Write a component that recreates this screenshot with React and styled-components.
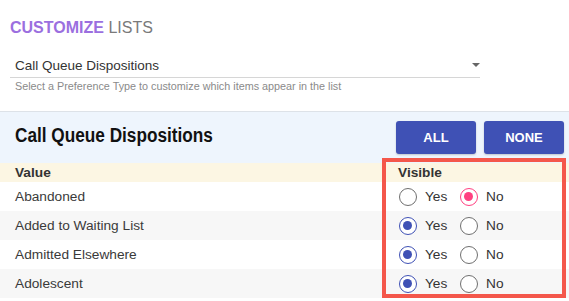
import React, { useState } from 'react';
import styled, { createGlobalStyle } from 'styled-components';

const GlobalStyle = createGlobalStyle`
    * { box-sizing: border-box; }
    body {
        margin: 0;
        background: #fff;
        font-family: "Liberation Sans", Arial, sans-serif;
        color: #333;
    }
`;

const Page = styled.div`
    width: 569px;
    overflow: hidden;
`;

const PageTitle = styled.h1`
    margin: 0;
    padding: 19px 10px 0;
    font-size: 16px;
    line-height: 18px;
    font-weight: normal;
    color: #7a7a7a;

    strong {
        color: #9b6fdf;
        font-weight: bold;
    }
`;

const SelectField = styled.div`
    margin: 19px 0 0 10px;
    width: 470px;
`;

const SelectBox = styled.div`
    display: flex;
    align-items: center;
    justify-content: space-between;
    height: 22px;
    padding: 0 0 3px 5px;
    border-bottom: 1px solid #d6d6d6;
    font-size: 13.5px;
    color: #333;
`;

const Caret = styled.span`
    width: 0;
    height: 0;
    border-left: 4px solid transparent;
    border-right: 4px solid transparent;
    border-top: 4px solid #666;
`;

const HelperText = styled.div`
    margin-top: 2px;
    padding-left: 5px;
    font-size: 10.8px;
    line-height: 13px;
    color: #8a8a8a;
`;

const Panel = styled.section`
    margin-top: 18px;
    border-top: 1px solid #dde2e8;
`;

const PanelHeader = styled.div`
    display: flex;
    align-items: flex-start;
    justify-content: space-between;
    height: 51px;
    padding: 9px 5px 0 15px;
    background: #eef5fd;
`;

const PanelTitle = styled.h2`
    margin: 0;
    padding-top: 2px;
    font-family: "Liberation Sans", Arial, sans-serif;
    font-size: 20px;
    line-height: 24px;
    font-weight: bold;
    color: #111;
    transform: scaleX(0.86);
    transform-origin: left center;
    white-space: nowrap;
`;

const ButtonGroup = styled.div`
    display: flex;
    gap: 8px;
`;

const ActionButton = styled.button`
    width: 80px;
    height: 33px;
    border: none;
    border-radius: 3px;
    background: #3f51b5;
    color: #fff;
    font-family: "Liberation Sans", Arial, sans-serif;
    font-size: 13px;
    font-weight: bold;
    box-shadow: 0 1px 2px rgba(0, 0, 0, 0.2);
    cursor: pointer;
`;

const Table = styled.div`
    position: relative;
`;

const Row = styled.div`
    display: grid;
    grid-template-columns: 1fr 171px;
    align-items: center;
    height: ${props => (props.$head ? '19px' : '29px')};
    background: ${props => (props.$head ? '#fcf6e3' : props.$striped ? '#f7f7f7' : '#fff')};
    font-size: 13.7px;
    font-weight: ${props => (props.$head ? 'bold' : 'normal')};
    color: ${props => (props.$head ? '#333' : '#3a3a3a')};
`;

const ValueCell = styled.div`
    padding-left: 15px;
`;

const VisibleCell = styled.div`
    display: flex;
    align-items: center;
    padding-left: ${props => (props.$head ? '0' : '1px')};
`;

const Option = styled.label`
    display: flex;
    align-items: center;
    gap: 8px;
    width: 61px;
    font-size: 13.7px;
    color: #333;
    cursor: pointer;
`;

const RadioCircle = styled.span`
    position: relative;
    width: 18px;
    height: 18px;
    border-radius: 50%;
    border: 1.5px solid ${props => (props.$checked ? props.$color : '#6f6f6f')};
    background: #fff;

    &::after {
        content: '';
        position: absolute;
        top: 3px;
        left: 3px;
        width: 9px;
        height: 9px;
        border-radius: 50%;
        background: ${props => props.$color};
        display: ${props => (props.$checked ? 'block' : 'none')};
    }
`;

const Highlight = styled.div`
    position: absolute;
    top: -5px;
    left: 382px;
    width: 184px;
    height: 140px;
    border: 4px solid #f4574b;
    pointer-events: none;
`;

const initialItems = [
    { name: 'Abandoned', visible: false },
    { name: 'Added to Waiting List', visible: true },
    { name: 'Admitted Elsewhere', visible: true },
    { name: 'Adolescent', visible: true },
];

function App() {
    const [items, setItems] = useState(initialItems);

    const setAll = value => setItems(list => list.map(item => ({ ...item, visible: value })));
    const setOne = (index, value) =>
        setItems(list => list.map((item, i) => (i === index ? { ...item, visible: value } : item)));

    return (
        <Page>
            <GlobalStyle />
            <PageTitle>
                <strong>CUSTOMIZE</strong> LISTS
            </PageTitle>
            <SelectField>
                <SelectBox>
                    <span>Call Queue Dispositions</span>
                    <Caret />
                </SelectBox>
                <HelperText>Select a Preference Type to customize which items appear in the list</HelperText>
            </SelectField>
            <Panel>
                <PanelHeader>
                    <PanelTitle>Call Queue Dispositions</PanelTitle>
                    <ButtonGroup>
                        <ActionButton type="button" onClick={() => setAll(true)}>ALL</ActionButton>
                        <ActionButton type="button" onClick={() => setAll(false)}>NONE</ActionButton>
                    </ButtonGroup>
                </PanelHeader>
                <Table>
                    <Row $head>
                        <ValueCell>Value</ValueCell>
                        <VisibleCell $head>Visible</VisibleCell>
                    </Row>
                    {items.map((item, i) => (
                        <Row key={item.name} $striped={i % 2 === 1}>
                            <ValueCell>{item.name}</ValueCell>
                            <VisibleCell>
                                <Option onClick={() => setOne(i, true)}>
                                    <RadioCircle $checked={item.visible} $color="#3f51b5" />
                                    Yes
                                </Option>
                                <Option onClick={() => setOne(i, false)}>
                                    <RadioCircle $checked={!item.visible} $color="#ff4081" />
                                    No
                                </Option>
                            </VisibleCell>
                        </Row>
                    ))}
                    <Highlight />
                </Table>
            </Panel>
        </Page>
    );
}

export default App;
